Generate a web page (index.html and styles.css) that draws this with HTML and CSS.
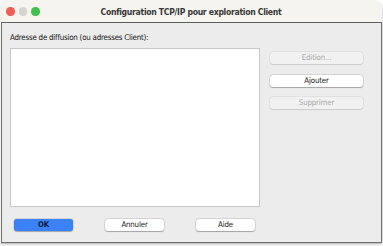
FILE: index.html
```html
<!DOCTYPE html>
<html lang="fr">
<head>
<meta charset="utf-8">
<title>Configuration TCP/IP pour exploration Client</title>
<link rel="stylesheet" href="styles.css">
</head>
<body>
<div class="window">
  <div class="titlebar">
    <div class="lights">
      <span class="light red"></span>
      <span class="light gray"></span>
      <span class="light green"></span>
    </div>
    <div class="title">Configuration TCP/IP pour exploration Client</div>
    <div></div>
  </div>
  <div class="content">
    <div class="main">
      <div class="left">
        <div class="label">Adresse de diffusion (ou adresses Client):</div>
        <div class="listbox"></div>
      </div>
      <div class="side">
        <button class="btn disabled">Edition...</button>
        <button class="btn">Ajouter</button>
        <button class="btn disabled">Supprimer</button>
      </div>
    </div>
    <div class="footer">
      <button class="btn primary">OK</button>
      <button class="btn">Annuler</button>
      <button class="btn">Aide</button>
    </div>
  </div>
</div>
</body>
</html>
```
FILE: styles.css
```css
html, body {
  margin: 0;
  padding: 0;
  background: #ffffff;
}
body {
  width: 383px;
  height: 246px;
  overflow: hidden;
  font-family: "DejaVu Sans Condensed", "DejaVu Sans", sans-serif;
}
.window {
  width: 382px;
  height: 243px;
  border-radius: 10px 10px 0 0;
  overflow: hidden;
  background: #f6f4ef;
  box-shadow: 0 1px 3px rgba(0,0,0,0.35);
  display: flex;
  flex-direction: column;
}
.titlebar {
  height: 22px;
  flex: none;
  display: grid;
  grid-template-columns: 1fr auto 1fr;
  align-items: center;
  background: #f6f4ef;
}
.lights {
  display: flex;
  gap: 4px;
  padding-left: 6px;
  padding-top: 1px;
}
.light {
  width: 8.5px;
  height: 8.5px;
  border-radius: 50%;
  display: block;
}
.red { background: #ed5f57; }
.gray { background: #d6d4d1; }
.green { background: #3fc04f; }
.title {
  font-size: 8.6px;
  letter-spacing: -0.3px;
  font-weight: bold;
  color: #383838;
  padding-top: 2px;
}
.content {
  flex: 1;
  margin-left: 1px;
  background: #ececec;
  border: 1px solid #6e6e6e;
  border-top-color: #5e5e5e;
  padding: 10px 0 0 8px;
}
.main {
  display: flex;
}
.left {
  width: 250px;
}
.label {
  font-size: 7.9px;
  letter-spacing: -0.22px;
  line-height: 10px;
  color: #141414;
  margin-bottom: 5px;
}
.listbox {
  height: 157px;
  background: #ffffff;
  border: 1px solid #c8c8c8;
}
.side {
  margin-left: 10px;
  padding-top: 19px;
  display: flex;
  flex-direction: column;
  gap: 10.5px;
}
.btn {
  width: 93px;
  height: 12px;
  padding: 0;
  border: none;
  border-radius: 3px;
  background: #ffffff;
  box-shadow: 0 0 0 0.5px rgba(0,0,0,0.15), 0 0.5px 1px rgba(0,0,0,0.25);
  font-family: "DejaVu Sans Condensed", "DejaVu Sans", sans-serif;
  font-size: 7.8px;
  letter-spacing: -0.15px;
  line-height: 12px;
  color: #141414;
  text-align: center;
}
.btn.disabled {
  background: #f1f1f1;
  color: #a9a9a9;
  box-shadow: 0 0 0 0.5px rgba(0,0,0,0.08), 0 0.5px 1px rgba(0,0,0,0.1);
}
.footer {
  display: flex;
  gap: 32px;
  margin-top: 12px;
  padding-left: 4px;
}
.footer .btn {
  width: 59px;
}
.btn.primary {
  background: #3b82f7;
  color: #0d1a33;
  font-weight: bold;
}
```
